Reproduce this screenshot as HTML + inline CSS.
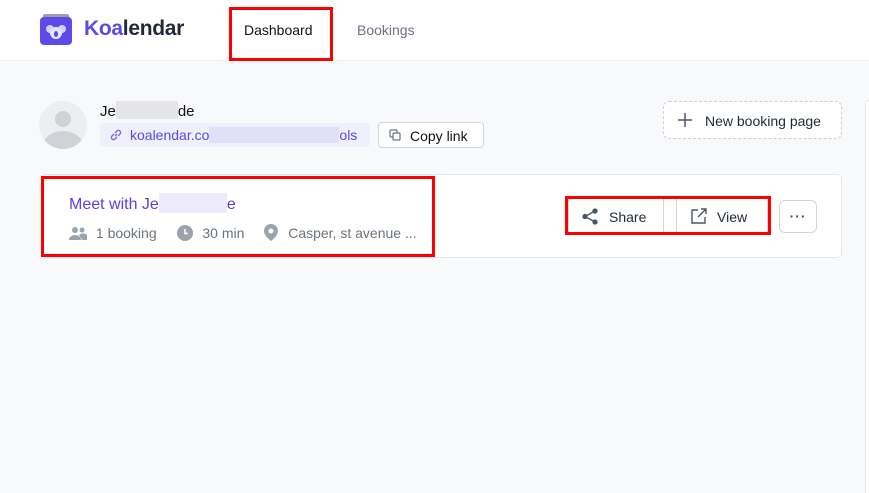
<!DOCTYPE html>
<html><head><style>
*{box-sizing:border-box;margin:0;padding:0}
body{width:869px;height:493px;overflow:hidden;background:#f8f9fb;font-family:"Liberation Sans",sans-serif;position:relative;color:#1f2937}
.abs{position:absolute}
.hdr{left:0;top:0;width:869px;height:61px;background:#fff;border-bottom:1px solid #eceef2}
.red{border:3px solid #f00}
.btn{background:#fff;border:1px solid #d1d5db;border-radius:4px}
</style></head><body>
<div class="abs hdr"></div>
<svg class="abs" style="left:40px;top:14px" width="32" height="31" viewBox="0 0 32 31">
<rect x="3" y="0" width="26" height="6" rx="2" fill="#9aa0b4"/>
<rect x="0" y="3" width="32" height="28" rx="4" fill="#5b4ae6"/>
<circle cx="10" cy="15" r="4" fill="#cfd0f7"/><circle cx="22" cy="15" r="4" fill="#cfd0f7"/>
<ellipse cx="16" cy="19" rx="6" ry="6" fill="#e4e5fb"/><ellipse cx="16" cy="20" rx="2" ry="3" fill="#5b4ae6"/>
</svg>
<div class="abs" style="left:84px;top:17px;font-size:21px;font-weight:bold;letter-spacing:-0.3px"><span style="color:#5b4ae6">Koa</span><span style="color:#1f2937">lendar</span></div>
<div class="abs red" style="left:229px;top:7px;width:104px;height:54px"></div>
<div class="abs" style="left:244px;top:22px;font-size:14px;color:#111">Dashboard</div>
<div class="abs" style="left:357px;top:22px;font-size:14px;color:#6b7280">Bookings</div>

<div class="abs" style="left:39px;top:101px;width:48px;height:48px;border-radius:50%;background:#eceef0;overflow:hidden">
<div class="abs" style="left:16px;top:10px;width:16px;height:16px;border-radius:50%;background:#cfd2d6"></div>
<div class="abs" style="left:4px;top:30px;width:40px;height:30px;border-radius:50%;background:#cfd2d6"></div></div>
<div class="abs" style="left:100px;top:101px;font-size:15px;color:#111">Je<span style="display:inline-block;width:62px;height:18px;background:#e5e5e7;vertical-align:-3px"></span>de</div>
<div class="abs" style="left:100px;top:123px;width:270px;height:24px;background:#eef0fc;border-radius:4px;font-size:14px;color:#5b4ae6;padding:4px 0 0 30px">koalendar.co<span style="display:inline-block;width:130px;height:16px;background:#e0e1f8;vertical-align:-3px"></span>ols</div>
<svg class="abs" style="left:109px;top:128px" width="14" height="14" viewBox="0 0 14 14" fill="none" stroke="#7c6cf0" stroke-width="1.4"><path d="M6 8l2-2M5 6L3 8a2 2 0 003 3l2-2M9 8l2-2a2 2 0 00-3-3L6 5"/></svg>
<div class="abs btn" style="left:378px;top:122px;width:106px;height:26px;font-size:14px;padding:5px 0 0 31px;color:#111">Copy link</div>
<svg class="abs" style="left:389px;top:129px" width="12" height="12" viewBox="0 0 12 12" fill="none" stroke="#6b7280" stroke-width="1.2"><rect x="1" y="1" width="7" height="7" rx="1"/><rect x="4" y="4" width="7" height="7" rx="1" fill="#fff"/></svg>
<div class="abs" style="left:663px;top:101px;width:179px;height:38px;border:1px dashed #cbd0d8;border-radius:6px;background:#fff;font-size:14px;padding:11px 0 0 41px;color:#1f2937">New booking page</div>
<svg class="abs" style="left:678px;top:113px" width="14" height="14" viewBox="0 0 14 14" stroke="#4b5563" stroke-width="1.5"><path d="M7 0v14M0 7h14"/></svg>
<div class="abs" style="left:865px;top:100px;width:4px;height:393px;background:#fff;border-left:1px solid #e5e7eb;border-top:1px solid #e5e7eb;border-radius:4px 0 0 0"></div>

<div class="abs" style="left:41px;top:174px;width:801px;height:84px;background:#fff;border:1px solid #e5e7eb;border-radius:5px"></div>
<div class="abs red" style="left:41px;top:176px;width:394px;height:81px"></div>
<div class="abs" style="left:69px;top:193px;font-size:16px;color:#5b3fe3">Meet with Je<span style="display:inline-block;width:68px;height:20px;background:#eceafb;vertical-align:-4px"></span>e</div>
<div class="abs" style="left:69px;top:224px;font-size:14px;color:#6b7280;white-space:nowrap">
<svg width="18" height="14" viewBox="0 0 18 14" style="vertical-align:-2px" fill="#9ca3af"><circle cx="6" cy="4" r="3"/><circle cx="13" cy="4" r="2.5"/><path d="M0 14a6 5 0 0112 0z"/><path d="M10 9a5 4 0 018 5h-5z"/></svg>
<span style="margin-left:5px">1 booking</span>
<svg width="16" height="16" viewBox="0 0 16 16" style="vertical-align:-3px;margin-left:16px"><circle cx="8" cy="8" r="8" fill="#9ca3af"/><path d="M8 4v4.5h3" stroke="#fff" stroke-width="1.6" fill="none"/></svg>
<span style="margin-left:6px">30 min</span>
<svg width="14" height="17" viewBox="0 0 14 17" style="vertical-align:-3px;margin-left:16px"><path d="M7 0a7 7 0 017 7c0 5-7 10-7 10S0 12 0 7a7 7 0 017-7z" fill="#9ca3af"/><circle cx="7" cy="7" r="2.5" fill="#fff"/></svg>
<span style="margin-left:6px">Casper, st avenue ...</span></div>

<div class="abs btn" style="left:568px;top:198px;width:96px;height:36px;font-size:14px;padding:10px 0 0 40px;color:#1f2937;border-radius:4px 0 0 4px">Share</div>
<div class="abs btn" style="left:676px;top:198px;width:92px;height:36px;font-size:14px;padding:10px 0 0 40px;color:#1f2937;border-radius:0 4px 4px 0">View</div>
<svg class="abs" style="left:582px;top:208px" width="17" height="17" viewBox="0 0 17 17" fill="#4b5563" stroke="#4b5563" stroke-width="1.3"><circle cx="13" cy="3" r="2"/><circle cx="3" cy="8.5" r="2"/><circle cx="13" cy="14" r="2"/><path d="M3 8.5L13 3M3 8.5L13 14" fill="none"/></svg>
<svg class="abs" style="left:691px;top:208px" width="16" height="16" viewBox="0 0 16 16" fill="none" stroke="#4b5563" stroke-width="1.4"><path d="M7 2H1v13h13V9M10 1h5v5M15 1L7 9"/></svg>
<div class="abs red" style="left:565px;top:196px;width:206px;height:39px"></div>
<div class="abs btn" style="left:779px;top:200px;width:38px;height:33px;border-radius:6px;text-align:center;font-size:14px;font-weight:bold;color:#4b5563;padding-top:7px;letter-spacing:1px">···</div>
</body></html>
